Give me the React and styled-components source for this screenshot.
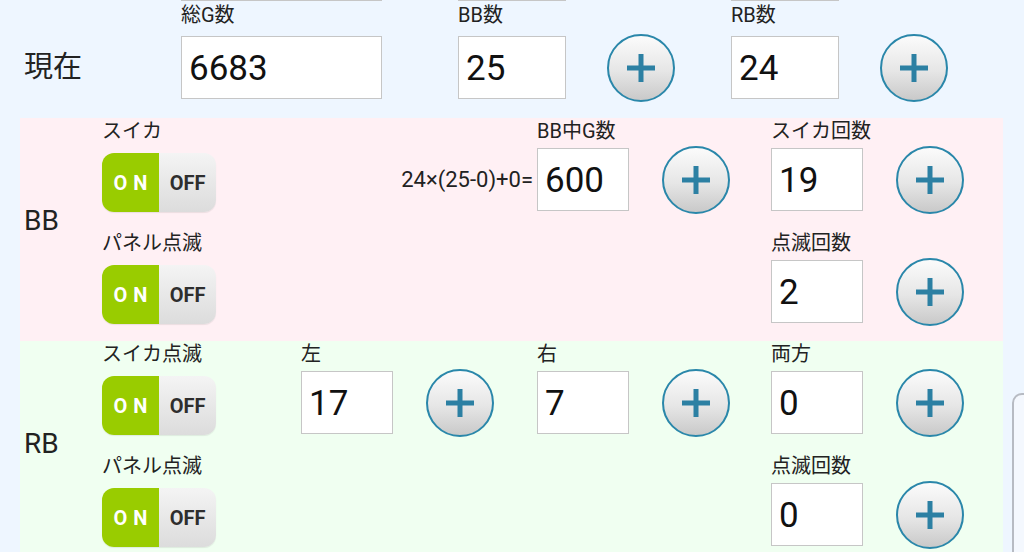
import React from "react";
import styled, { createGlobalStyle } from "styled-components";

const GlobalStyle = createGlobalStyle`
	html, body {
		margin: 0;
		padding: 0;
		background: #eef6ff;
		overflow: hidden;
	}
	body {
		font-family: Roboto, "Noto Sans CJK JP", sans-serif;
		color: #222;
	}
`;

const Page = styled.div`
	position: relative;
	width: 1024px;
	height: 552px;
	overflow: hidden;
`;

const GhostStrip = styled.div`
	display: grid;
	grid-template-columns: 181px 277px 273px 1fr;
	height: 2px;
`;

const GhostBox = styled.div`
	width: ${({ w }) => w}px;
	height: 1px;
	background: #fff;
	border-bottom: 1px solid #c6c6c6;
	border-left: 1px solid #c6c6c6;
	border-right: 1px solid #c6c6c6;
	box-sizing: border-box;
`;

const CurrentRow = styled.div`
	display: grid;
	grid-template-columns: 181px 277px 273px 1fr;
	height: 116px;
`;

const RowTitle = styled.div`
	font-family: "Noto Sans CJK JP", sans-serif;
	font-size: 29px;
	padding-left: 24px;
	height: 63px;
	margin-top: 30px;
	display: flex;
	align-items: center;
`;

const Section = styled.div`
	margin-left: 20px;
	width: 983px;
	background: ${({ tone }) => (tone === "pink" ? "#fff0f4" : "#f0fff1")};
	display: grid;
	grid-template-columns: 82px 199px 236px 234px 1fr;
	grid-template-rows: 112px 111px;
	flex-shrink: 0;
`;

const SectionTitle = styled.div`
	grid-row: 1 / span 2;
	grid-column: 1;
	display: flex;
	align-items: center;
	padding-left: 4px;
	padding-bottom: 18px;
	font-size: 28px;
`;

const Field = styled.div`
	display: flex;
	flex-direction: column;
	grid-column: ${({ col }) => col};
	grid-row: ${({ row }) => row};
`;

const Caption = styled.div`
	font-family: Roboto, "Noto Sans CJK JP", sans-serif;
	font-size: 20px;
	line-height: 26px;
	height: 26px;
	margin-bottom: ${({ gap }) => gap ?? 4}px;
	white-space: nowrap;
`;

const Controls = styled.div`
	display: flex;
	align-items: center;
	gap: ${({ gap }) => gap ?? 33}px;
	height: 63px;
	justify-content: ${({ end }) => (end ? "flex-end" : "flex-start")};
	padding-right: ${({ end }) => (end ? 4 : 0)}px;
`;

const NumberBox = styled.div`
	box-sizing: border-box;
	width: ${({ w }) => w || 92}px;
	height: 63px;
	background: #fff;
	border: 1px solid #c6c6c6;
	padding-left: 7px;
	padding-top: 2px;
	display: flex;
	align-items: center;
	font-size: 35px;
	color: #111;
`;

const Formula = styled.div`
	font-size: 22px;
	white-space: nowrap;
	color: #222;
`;

const PlusButton = styled.button`
	box-sizing: border-box;
	width: 68px;
	height: 68px;
	flex-shrink: 0;
	border-radius: 50%;
	border: 2.5px solid #2a87aa;
	background: linear-gradient(#fbfbfb, #e6e6e6 55%, #c9c9c9);
	display: flex;
	align-items: center;
	justify-content: center;
	padding: 0;
`;

const ToggleWrap = styled.div`
	display: flex;
	width: 114px;
	height: 59px;
	margin-top: 9px;
	border-radius: 12px;
	overflow: hidden;
	box-shadow: 0 1px 1px rgba(0, 0, 0, 0.08);
`;

const ToggleHalf = styled.div`
	width: 57px;
	box-sizing: border-box;
	display: flex;
	align-items: center;
	justify-content: center;
	font-family: Roboto, sans-serif;
	font-weight: bold;
	font-size: 20px;
	${({ on }) =>
		on
			? `background: #99cc00; color: #fff; letter-spacing: 6px; padding-left: 6px;`
			: `background: linear-gradient(#f4f4f4, #dcdcdc); color: #2e2e2e;`}
`;

const SideFrame = styled.div`
	position: absolute;
	left: 1012px;
	top: 393px;
	width: 60px;
	height: 200px;
	border: 2px solid #b7bbc3;
	border-radius: 10px;
	background: #f4f8fe;
`;

const Plus = () => (
	<PlusButton>
		<svg width="32" height="32" viewBox="0 0 32 32">
			<path d="M16 2v28M2 16h28" stroke="#2c80a3" strokeWidth="5" />
		</svg>
	</PlusButton>
);

const Toggle = () => (
	<ToggleWrap>
		<ToggleHalf on>ON</ToggleHalf>
		<ToggleHalf>OFF</ToggleHalf>
	</ToggleWrap>
);

const Counter = ({ col, row, label, value, w }) => (
	<Field col={col} row={row}>
		<Caption>{label}</Caption>
		<Controls>
			<NumberBox w={w}>{value}</NumberBox>
			<Plus />
		</Controls>
	</Field>
);

const Switch = ({ row, label }) => (
	<Field col={2} row={row}>
		<Caption gap={0}>{label}</Caption>
		<Toggle />
	</Field>
);

export default function App() {
	return (
		<Page>
			<GlobalStyle />
			<GhostStrip>
				<div />
				<GhostBox w={201} />
				<GhostBox w={108} />
				<GhostBox w={108} />
			</GhostStrip>
			<CurrentRow>
				<RowTitle>現在</RowTitle>
				<Field>
					<Caption gap={8}>総G数</Caption>
					<Controls>
						<NumberBox w={201}>6683</NumberBox>
					</Controls>
				</Field>
				<Field>
					<Caption gap={8}>BB数</Caption>
					<Controls gap={41}>
						<NumberBox w={108}>25</NumberBox>
						<Plus />
					</Controls>
				</Field>
				<Field>
					<Caption gap={8}>RB数</Caption>
					<Controls gap={41}>
						<NumberBox w={108}>24</NumberBox>
						<Plus />
					</Controls>
				</Field>
			</CurrentRow>

			<Section tone="pink">
				<SectionTitle>BB</SectionTitle>
				<Switch row={1} label="スイカ" />
				<Field col={3} row={1}>
					<Caption />
					<Controls end>
						<Formula>24×(25-0)+0=</Formula>
					</Controls>
				</Field>
				<Counter col={4} row={1} label="BB中G数" value="600" />
				<Counter col={5} row={1} label="スイカ回数" value="19" />
				<Switch row={2} label="パネル点滅" />
				<Counter col={5} row={2} label="点滅回数" value="2" />
			</Section>

			<Section tone="green">
				<SectionTitle>RB</SectionTitle>
				<Switch row={1} label="スイカ点滅" />
				<Counter col={3} row={1} label="左" value="17" />
				<Counter col={4} row={1} label="右" value="7" />
				<Counter col={5} row={1} label="両方" value="0" />
				<Switch row={2} label="パネル点滅" />
				<Counter col={5} row={2} label="点滅回数" value="0" />
			</Section>

			<SideFrame />
		</Page>
	);
}
